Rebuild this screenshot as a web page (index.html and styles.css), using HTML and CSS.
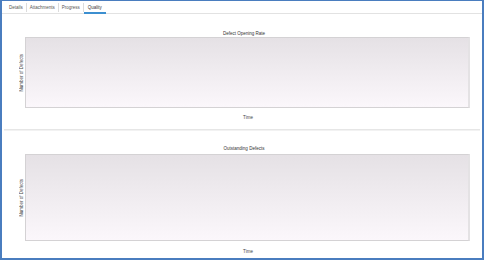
FILE: index.html
```html
<!DOCTYPE html>
<html lang="en">
<head>
    <meta charset="UTF-8">
    <title>Quality</title>
    <link rel="stylesheet" href="styles.css">
</head>
<body>
    <div class="window">
        <div class="tabs">
            <span class="tab">Details</span>
            <span class="tab">Attachments</span>
            <span class="tab">Progress</span>
            <span class="tab active">Quality</span>
        </div>

        <div class="chart first">
            <div class="chart-title">Defect Opening Rate</div>
            <div class="chart-body">
                <div class="y-label"><span>Number of Defects</span></div>
                <div class="plot plot-one"></div>
            </div>
            <div class="x-label">Time</div>
        </div>

        <div class="divider"></div>

        <div class="chart second">
            <div class="chart-title">Outstanding Defects</div>
            <div class="chart-body">
                <div class="y-label"><span>Number of Defects</span></div>
                <div class="plot plot-two"></div>
            </div>
            <div class="x-label">Time</div>
        </div>
    </div>
</body>
</html>
```

FILE: styles.css
```css
* {
    font-family: 'Liberation Sans', Arial, sans-serif;
    box-sizing: border-box;
}

body {
    margin: 0;
    background-color: #ffffff;
}

.window {
    width: 484px;
    height: 260px;
    border: 2px solid #4a7dbf;
    border-top-width: 1px;
    display: flex;
    flex-direction: column;
}

.tabs {
    display: flex;
    align-items: center;
    height: 13px;
    border-bottom: 1px solid #e2e2e2;
    padding-left: 4px;
    flex-shrink: 0;
}

.tab {
    font-size: 4.5px;
    color: #555555;
    padding: 0 3px 0 1px;
    height: 9px;
    line-height: 9px;
    border-right: 1px solid #dcdcdc;
    margin-left: 2px;
}

.tab.active {
    border-right: none;
    color: #333333;
    padding: 0 4px;
    margin-left: 0;
    height: 12px;
    line-height: 12px;
    border-bottom: 2px solid #3c8fd0;
    margin-top: 1px;
}

.chart {
    display: flex;
    flex-direction: column;
    align-items: stretch;
}

.chart.first {
    padding-top: 16px;
    height: 115px;
}

.chart.second {
    padding-top: 14px;
    flex: 1;
}

.chart-title {
    font-size: 4.5px;
    color: #333333;
    text-align: center;
    height: 7px;
    line-height: 7px;
    padding-left: 4px;
}

.second .chart-title {
    margin-bottom: 2px;
}

.chart-body {
    display: flex;
    margin-right: 12px;
}

.y-label {
    width: 23px;
    display: flex;
    align-items: center;
    justify-content: flex-end;
}

.y-label span {
    writing-mode: vertical-rl;
    transform: rotate(180deg);
    font-size: 4.5px;
    color: #444444;
    white-space: nowrap;
    margin-right: 1px;
}

.plot {
    flex: 1;
    border: 1px solid #d4d2d4;
    border-right: 2px solid #e4e2e4;
    background: linear-gradient(#e5e1e5, #fbf7fb);
}

.plot-one {
    height: 71px;
}

.plot-two {
    height: 87px;
}

.x-label {
    font-size: 4.5px;
    color: #444444;
    text-align: center;
    padding-left: 12px;
    margin-top: 7px;
}

.second .x-label {
    margin-top: 8px;
}

.divider {
    height: 2px;
    margin: 0 2px;
    border-top: 1px solid #e6e6e6;
    border-bottom: 1px solid #f2f2f2;
    flex-shrink: 0;
}
```
